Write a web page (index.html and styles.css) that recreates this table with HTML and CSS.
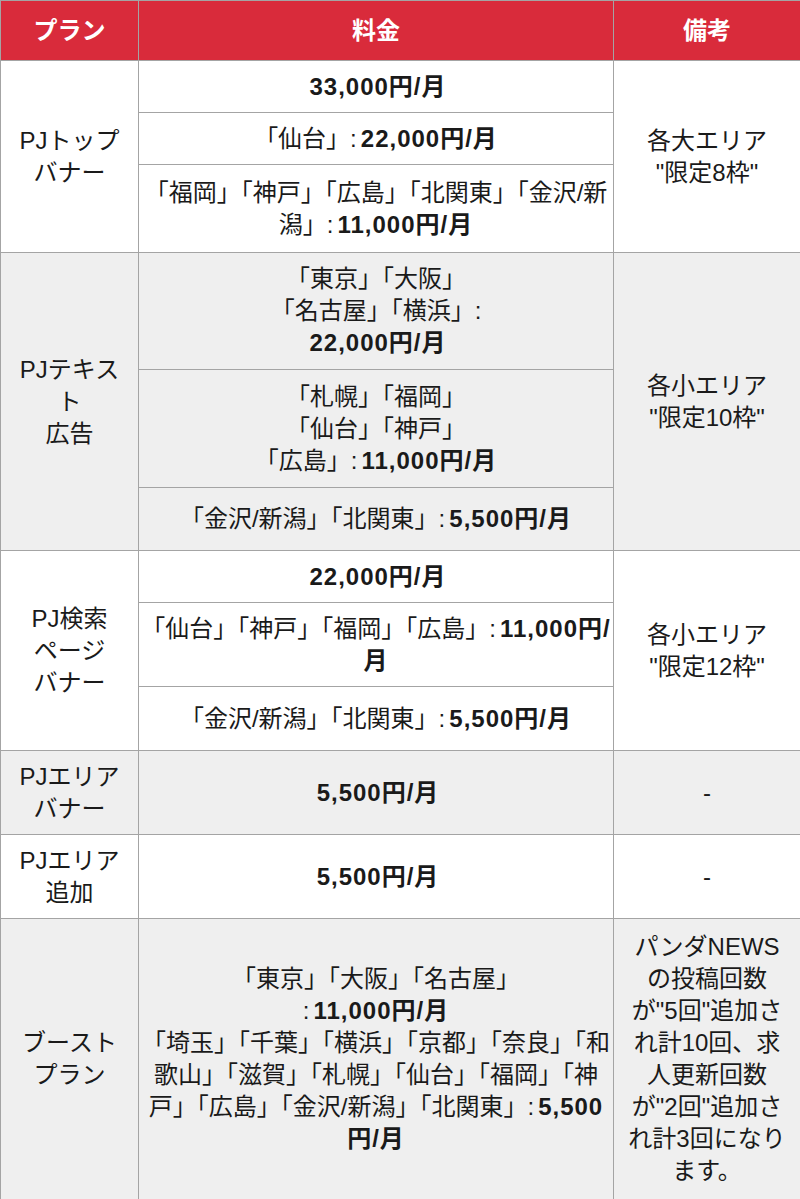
FILE: index.html
```html
<!DOCTYPE html>
<html lang="ja">
<head>
<meta charset="utf-8">
<title>料金プラン</title>
<link rel="stylesheet" href="styles.css">
</head>
<body>
<table class="plans">
  <colgroup>
    <col class="c-plan">
    <col class="c-price">
    <col class="c-note">
  </colgroup>
  <thead>
    <tr class="head">
      <th>プラン</th>
      <th>料金</th>
      <th>備考</th>
    </tr>
  </thead>
  <tbody>
    <tr class="h52">
      <td class="plan" rowspan="3">PJトップ<br>バナー</td>
      <td class="price"><b>33,000円/月</b></td>
      <td class="note" rowspan="3">各大エリア<br>"限定8枠"</td>
    </tr>
    <tr class="h52">
      <td class="price">「仙台」:<b>22,000円/月</b></td>
    </tr>
    <tr class="h88">
      <td class="price">「福岡」「神戸」「広島」「北関東」「金沢/新<br>潟」:<b>11,000円/月</b></td>
    </tr>

    <tr class="alt h117">
      <td class="plan" rowspan="3">PJテキスト<br>広告</td>
      <td class="price">「東京」「大阪」<br>「名古屋」「横浜」:<br><b>22,000円/月</b></td>
      <td class="note" rowspan="3">各小エリア<br>"限定10枠"</td>
    </tr>
    <tr class="alt h118">
      <td class="price">「札幌」「福岡」<br>「仙台」「神戸」<br>「広島」:<b>11,000円/月</b></td>
    </tr>
    <tr class="alt h63">
      <td class="price">「金沢/新潟」「北関東」:<b>5,500円/月</b></td>
    </tr>

    <tr class="h52">
      <td class="plan" rowspan="3">PJ検索<br>ページ<br>バナー</td>
      <td class="price"><b>22,000円/月</b></td>
      <td class="note" rowspan="3">各小エリア<br>"限定12枠"</td>
    </tr>
    <tr class="h84">
      <td class="price">「仙台」「神戸」「福岡」「広島」:<b>11,000円/<br>月</b></td>
    </tr>
    <tr class="h64">
      <td class="price">「金沢/新潟」「北関東」:<b>5,500円/月</b></td>
    </tr>

    <tr class="alt h84">
      <td class="plan">PJエリア<br>バナー</td>
      <td class="price"><b>5,500円/月</b></td>
      <td class="note">-</td>
    </tr>
    <tr class="h84">
      <td class="plan">PJエリア<br>追加</td>
      <td class="price"><b>5,500円/月</b></td>
      <td class="note">-</td>
    </tr>
    <tr class="alt h281">
      <td class="plan">ブースト<br>プラン</td>
      <td class="price">「東京」「大阪」「名古屋」<br>:<b>11,000円/月</b><br>「埼玉」「千葉」「横浜」「京都」「奈良」「和<br>歌山」「滋賀」「札幌」「仙台」「福岡」「神<br>戸」「広島」「金沢/新潟」「北関東」:<b>5,500<br>円/月</b></td>
      <td class="note">パンダNEWSの投稿回数が"5回"追加され計10回、求人更新回数が"2回"追加され計3回になります。</td>
    </tr>
  </tbody>
</table>
</body>
</html>
```

FILE: styles.css
```css
html, body {
  margin: 0;
  padding: 0;
  background: #ffffff;
}

.plans {
  border-collapse: collapse;
  table-layout: fixed;
  width: 800px;
  font-family: "Liberation Sans", "Noto Sans CJK JP", sans-serif;
  font-size: 24px;
  line-height: 32px;
  color: #1a1a1a;
  text-align: center;
  font-feature-settings: "chws" 1;
}

.c-plan { width: 138px; }
.c-price { width: 475px; }
.c-note { width: 187px; }

.plans th,
.plans td {
  border: 1px solid #a4a4a4;
  padding: 0 1px;
  vertical-align: middle;
}

.plans th {
  background: #d92b3b;
  color: #ffffff;
  font-weight: bold;
}

.plans .plan {
  padding: 0 10px;
}

.plans .note {
  padding: 0 12px;
}

.plans b {
  font-weight: bold;
  letter-spacing: 1px;
  margin-left: 4px;
}

.head { height: 60px; }
.alt td { background: #efefef; }

.h52 { height: 52px; }
.h63 { height: 63px; }
.h64 { height: 64px; }
.h84 { height: 84px; }
.h88 { height: 88px; }
.h117 { height: 117px; }
.h118 { height: 118px; }
.h281 { height: 281px; }
```
